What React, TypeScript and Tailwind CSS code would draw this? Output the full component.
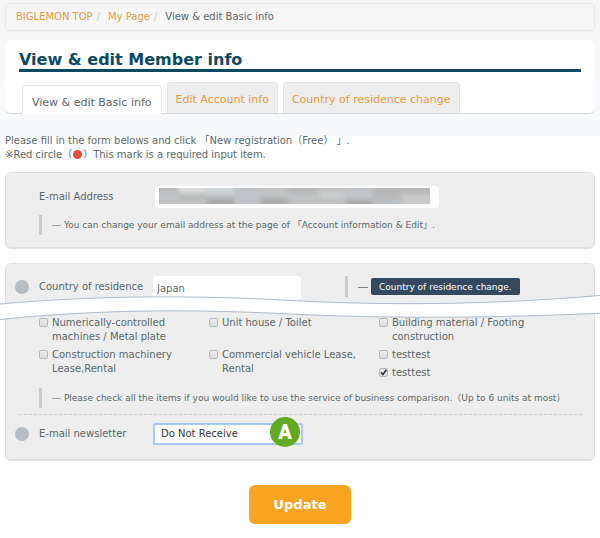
import type { ReactNode } from 'react'

function Note({ children }: { children: ReactNode }) {
  return (
    <div className="flex min-h-5 items-center border-l-3 border-[#c8cccd] pl-2.5 text-[9px] leading-[14px]">
      <p>― {children}</p>
    </div>
  )
}

function Choice({ id, label, checked = false }: { id: string; label: string; checked?: boolean }) {
  return (
    <div className="flex items-start gap-1">
      <span className="relative mt-0.5 flex shrink-0">
        <input
          id={id}
          type="checkbox"
          defaultChecked={checked}
          className="peer size-[9px] appearance-none rounded-[2px] border border-[#b5b8b9] bg-linear-to-b from-[#ececec] to-[#dcdcdc]"
        />
        <svg viewBox="0 0 9 9" className="pointer-events-none absolute inset-0 hidden size-[9px] peer-checked:block">
          <path d="M2 4.4 L3.9 6.4 L7.4 1.8" fill="none" stroke="#333" strokeWidth="1.6" />
        </svg>
      </span>
      <label htmlFor={id}>{label}</label>
    </div>
  )
}

function Dot() {
  return <span className="size-[14px] shrink-0 rounded-full bg-[#b4bcc4]" />
}

// pixelated cover over the member's address
function Mosaic() {
  return (
    <svg viewBox="0 0 271 16" preserveAspectRatio="none" className="pointer-events-none absolute top-0.5 left-1 h-4 w-[271px]">
      <filter id="soft">
        <feGaussianBlur stdDeviation="2" />
      </filter>
      <rect width="271" height="16" fill="#c1c3c4" />
      <g filter="url(#soft)">
        <rect x="-4" y="-4" width="24" height="10" fill="#b9bbbc" />
        <rect x="20" y="-4" width="26" height="9" fill="#dcdddd" />
        <rect x="46" y="-4" width="29" height="10" fill="#cfd4d7" />
        <rect x="20" y="6" width="26" height="5" fill="#b7b7b7" />
        <rect x="48" y="10" width="27" height="10" fill="#a9a9a9" />
        <rect x="78" y="2" width="24" height="16" fill="#bfc3c7" />
        <rect x="102" y="10" width="27" height="10" fill="#acacac" />
        <rect x="129" y="-4" width="30" height="10" fill="#b8b9b9" />
        <rect x="161" y="5" width="24" height="5" fill="#d0d1d1" />
        <rect x="186" y="1" width="28" height="10" fill="#c0c4c8" />
        <rect x="187" y="12" width="27" height="8" fill="#a8a8a8" />
        <rect x="214" y="-4" width="28" height="15" fill="#b7b7b7" />
        <rect x="216" y="11" width="26" height="9" fill="#bcc1c6" />
        <rect x="242" y="-4" width="34" height="10" fill="#b9b9b9" />
        <rect x="243" y="7" width="30" height="12" fill="#cacaca" />
      </g>
    </svg>
  )
}

export default function App() {
  return (
    <div className="bg-white font-['DejaVu_Sans','Noto_Sans_CJK_JP',sans-serif] text-[10px] leading-[14px] text-[#5a6769]">
      <header className="bg-linear-to-b from-[#f6f6f6] from-50% to-[#f8f9fd] to-65% px-[5px] pt-[3px] pb-[22px]">
        <nav className="flex h-7 items-center gap-1 rounded border border-[#e6e7ea] px-2.5">
          <a href="#top" className="text-[#e39a45]">BIGLEMON TOP</a>
          <span className="mr-1 text-[#ccc]">/</span>
          <a href="#mypage" className="text-[#e39a45]">My Page</a>
          <span className="mr-1 text-[#ccc]">/</span>
          <span>View &amp; edit Basic info</span>
        </nav>

        <div className="mt-[9px] rounded-md border-b border-[#d8d9db] bg-white px-3.5 pt-[11px]">
          <h1 className="border-b-3 border-[#0c4a62] text-[16px] leading-[18px] font-bold text-[#0c4a62]">
            View &amp; edit Member info
          </h1>
          <div className="mt-2.5 flex h-[31px] items-end gap-[5px] pl-[3px] text-[11px]">
            <a href="#basic" className="-mb-0.5 flex h-[30px] items-center rounded-t border border-b-0 border-[#e6e7e8] bg-white px-[9px] pt-1">
              View &amp; edit Basic info
            </a>
            <a href="#account" className="flex h-[31px] items-center rounded-t border border-b-0 border-[#e2e2e2] bg-[#eee] px-2 pt-1 text-[#e39a45]">
              Edit Account info
            </a>
            <a href="#country" className="flex h-[31px] items-center rounded-t border border-b-0 border-[#e2e2e2] bg-[#eee] px-2 pt-1 text-[#e39a45]">
              Country of residence change
            </a>
          </div>
        </div>
      </header>

      <main>
        <div className="-mt-0.5 px-[5px]">
          <p>Please fill in the form belows and click 「New registration（Free） 」.</p>
          <p>
            ※Red circle（
            <span className="mx-px inline-block size-[9px] rounded-full bg-[#e94b3a] align-[-1px]" />
            ）This mark is a required input item.
          </p>
        </div>

        <form>
          <section className="mx-[5px] mt-2.5 rounded-md border border-b-2 border-[#dfdfdf] bg-[#eee] pt-[13px] pr-3 pb-3 pl-[33px]">
            <div className="flex items-center">
              <label htmlFor="email" className="w-[116px]">E-mail Address</label>
              <div className="relative flex">
                <input id="email" type="text" className="h-[22px] w-[284px] rounded bg-white px-1" />
                <Mosaic />
              </div>
            </div>
            <div className="mt-[7px]">
              <Note>You can change your email address at the page of 「Account information &amp; Edit」.</Note>
            </div>
          </section>

          <div className="relative mt-3.5">
            <section className="mx-[5px] rounded-md border border-b-2 border-[#dfdfdf] bg-[#eee] pt-3 pr-3 pb-3.5 pl-[9px]">
              <div className="flex items-start">
                <div className="flex h-[22px] w-[138px] items-center gap-2.5">
                  <Dot />
                  <label htmlFor="country">Country of residence</label>
                </div>
                <input id="country" type="text" defaultValue="Japan" className="h-6 w-[148px] rounded bg-white px-1" />
                <div className="ml-11 flex h-[21px] items-center border-l-3 border-[#c8cccd] pl-2.5">
                  ―
                  <button type="button" className="ml-[3px] h-[17px] rounded-xs bg-[#34495e] px-2 text-[9px] text-white">
                    Country of residence change.
                  </button>
                </div>
              </div>

              <div className="mt-4 grid grid-cols-[170px_170px_1fr] gap-y-1 pl-6">
                <Choice id="numeric" label="Numerically-controlled machines / Metal plate" />
                <Choice id="unit" label="Unit house / Toilet" />
                <Choice id="building" label="Building material / Footing construction" />
                <Choice id="machinery" label="Construction machinery Lease,Rental" />
                <Choice id="vehicle" label="Commercial vehicle Lease, Rental" />
                <div className="flex flex-col gap-1">
                  <Choice id="test1" label="testtest" />
                  <Choice id="test2" label="testtest" checked />
                </div>
              </div>

              <div className="mt-2 pl-6">
                <Note>Please check all the items if you would like to use the service of business comparison.（Up to 6 units at most）</Note>
              </div>

              <div className="mt-1.5 ml-1 border-t border-dashed border-[#c2d3da]" />

              <div className="mt-2 flex items-center">
                <div className="flex w-[138px] items-center gap-2.5">
                  <Dot />
                  <label htmlFor="newsletter">E-mail newsletter</label>
                </div>
                <div className="relative flex">
                  <select id="newsletter" className="h-[22px] w-[150px] appearance-none rounded-xs border-2 border-[#a9c8f2] bg-white px-1.5 text-[#333]">
                    <option>Do Not Receive</option>
                  </select>
                  <span className="absolute -top-1.5 right-[3px] flex size-[30px] items-center justify-center rounded-full bg-[#62aa24] font-['Roboto',sans-serif] text-xl font-black text-white">
                    A
                  </span>
                </div>
              </div>
            </section>

            {/* torn strip that hides the skipped part of the form */}
            <svg viewBox="0 0 600 26" preserveAspectRatio="none" className="pointer-events-none absolute top-8 left-0 h-[26px] w-full">
              <path d="M0 9 C100 0 200 0 300 6 C400 11 500 9 600 0.5 V18.3 C500 22.6 400 24 300 19.5 C200 14 100 14 0 24.5 Z" fill="#fff" />
              <path d="M0 9 C100 0 200 0 300 6 C400 11 500 9 600 0.5 M0 24.5 C100 14 200 14 300 19.5 C400 24 500 22.6 600 18.3" fill="none" stroke="#aebbc9" />
            </svg>
          </div>

          <div className="mt-6 flex justify-center pb-4">
            <button type="submit" className="h-[39px] rounded-md bg-[#f7a421] px-[25px] text-[13px] font-bold text-white">
              Update
            </button>
          </div>
        </form>
      </main>
    </div>
  )
}
